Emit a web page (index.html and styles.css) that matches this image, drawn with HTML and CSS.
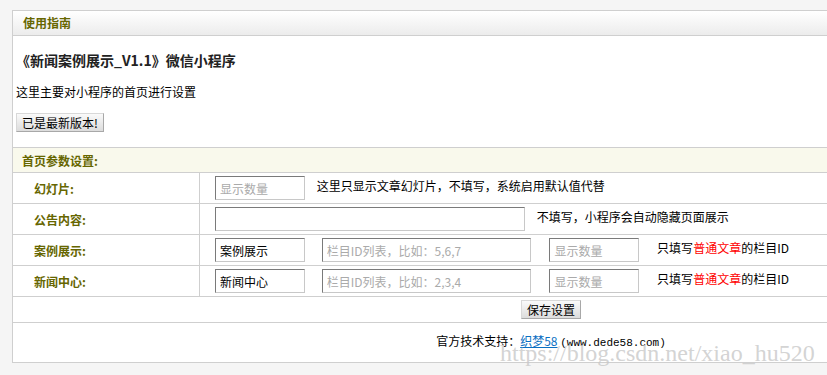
FILE: index.html
```html
<!DOCTYPE html>
<html lang="zh-CN">
<head>
    <meta charset="UTF-8">
    <meta name="viewport" content="width=device-width, initial-scale=1.0">
    <title>使用指南</title>
    <link rel="stylesheet" href="styles.css">
</head>
<body>
    <div class="box">
        <div class="box-head">使用指南</div>
        <div class="intro">
            <h3>《新闻案例展示_V1.1》微信小程序</h3>
            <p>这里主要对小程序的首页进行设置</p>
            <button type="button" class="btn">已是最新版本!</button>
        </div>

        <form>
            <table class="setting">
                <tr class="section">
                    <td colspan="2">首页参数设置:</td>
                </tr>
                <tr>
                    <th>幻灯片:</th>
                    <td>
                        <input type="text" class="ipt short" placeholder="显示数量">
                        <span class="tip">这里只显示文章幻灯片，不填写，系统启用默认值代替</span>
                    </td>
                </tr>
                <tr>
                    <th>公告内容:</th>
                    <td>
                        <input type="text" class="ipt wide">
                        <span class="tip">不填写，小程序会自动隐藏页面展示</span>
                    </td>
                </tr>
                <tr>
                    <th>案例展示:</th>
                    <td>
                        <input type="text" class="ipt short" value="案例展示">
                        <input type="text" class="ipt mid" placeholder="栏目ID列表，比如：5,6,7">
                        <input type="text" class="ipt short" placeholder="显示数量">
                        <span class="tip far">只填写<em>普通文章</em>的栏目ID</span>
                    </td>
                </tr>
                <tr>
                    <th>新闻中心:</th>
                    <td>
                        <input type="text" class="ipt short" value="新闻中心">
                        <input type="text" class="ipt mid" placeholder="栏目ID列表，比如：2,3,4">
                        <input type="text" class="ipt short" placeholder="显示数量">
                        <span class="tip far">只填写<em>普通文章</em>的栏目ID</span>
                    </td>
                </tr>
                <tr class="save-row">
                    <td colspan="2"><button type="submit" class="btn">保存设置</button></td>
                </tr>
            </table>
        </form>

        <div class="footer">
            官方技术支持：<a href="#">织梦58</a> <span class="url">(www.dede58.com)</span>
        </div>
    </div>

    <div class="watermark">https://blog.csdn.net/xiao_hu520</div>
</body>
</html>
```

FILE: styles.css
```css
html, body {
    margin: 0;
    padding: 0;
}
body {
    background: #f5f5f5;
    font-family: "Noto Sans CJK SC", "DejaVu Sans", sans-serif;
    font-size: 12px;
    color: #000;
    overflow: hidden;
    height: 375px;
    position: relative;
}
.box {
    margin: 10px 0 0 12px;
    width: 1076px;
    background: #fff;
    border: 1px solid #cfcfcf;
    border-right: none;
}
.box-head {
    height: 24px;
    line-height: 24px;
    padding-left: 10px;
    background: linear-gradient(#ffffff, #ececec);
    border-bottom: 1px solid #cfcfcf;
    color: #666600;
    font-weight: bold;
}
.intro {
    padding: 14px 3px 15px;
}
.intro h3 {
    margin: 0;
    font-size: 14px;
    line-height: 20px;
    color: #222;
}
.intro p {
    margin: 13px 0 12px;
    line-height: 18px;
}
.btn {
    font-family: "Noto Sans CJK SC", sans-serif;
    font-size: 12px;
    height: 19px;
    line-height: 15px;
    padding: 0 5px;
    border: 1px solid #a8a8a8;
    border-top-color: #d8d8d8;
    border-left-color: #d8d8d8;
    background: linear-gradient(#fafafa, #dcdcdc);
    color: #000;
}
.setting {
    width: 100%;
    border-collapse: collapse;
}
.setting tr {
    border-top: 1px solid #cfcfcf;
}
.setting th {
    width: 165px;
    height: 30px;
    padding: 0 0 0 21px;
    text-align: left;
    color: #666600;
    border-right: 1px solid #cfcfcf;
}
.setting td {
    padding: 0 0 0 15px;
    vertical-align: middle;
}
.setting .section td {
    height: 24px;
    padding: 0 0 0 9px;
    background: #f9f9ec;
    color: #666600;
    font-weight: bold;
}
.ipt {
    box-sizing: border-box;
    height: 24px;
    margin: 0;
    padding: 0 4px;
    border: 1px solid #c8c8c8;
    border-top-color: #7a7a7a;
    border-left-color: #7a7a7a;
    font-family: "Noto Sans CJK SC", sans-serif;
    font-size: 12px;
    vertical-align: middle;
}
.ipt::placeholder {
    color: #aaa;
}
.short {
    width: 90px;
}
.mid {
    width: 209px;
    margin-left: 14px;
}
.mid + .short {
    margin-left: 16px;
}
.wide {
    width: 310px;
}
.tip {
    margin-left: 9px;
}
.tip.far {
    margin-left: 15px;
}
.tip em {
    font-style: normal;
    color: #ff0000;
}
.setting .save-row td {
    height: 25px;
    padding: 0;
    text-align: center;
}
.footer {
    border-top: 1px solid #cfcfcf;
    height: 40px;
    padding-top: 8px;
    box-sizing: border-box;
    line-height: 20px;
    text-align: center;
}
.footer a {
    color: #0a6fc2;
}
.url {
    font-family: "Liberation Mono", monospace;
    font-size: 11px;
}
.watermark {
    position: absolute;
    left: 500px;
    top: 340px;
    font-family: "Liberation Serif", serif;
    font-size: 24px;
    color: rgba(200, 200, 200, 0.8);
    white-space: nowrap;
}
```
